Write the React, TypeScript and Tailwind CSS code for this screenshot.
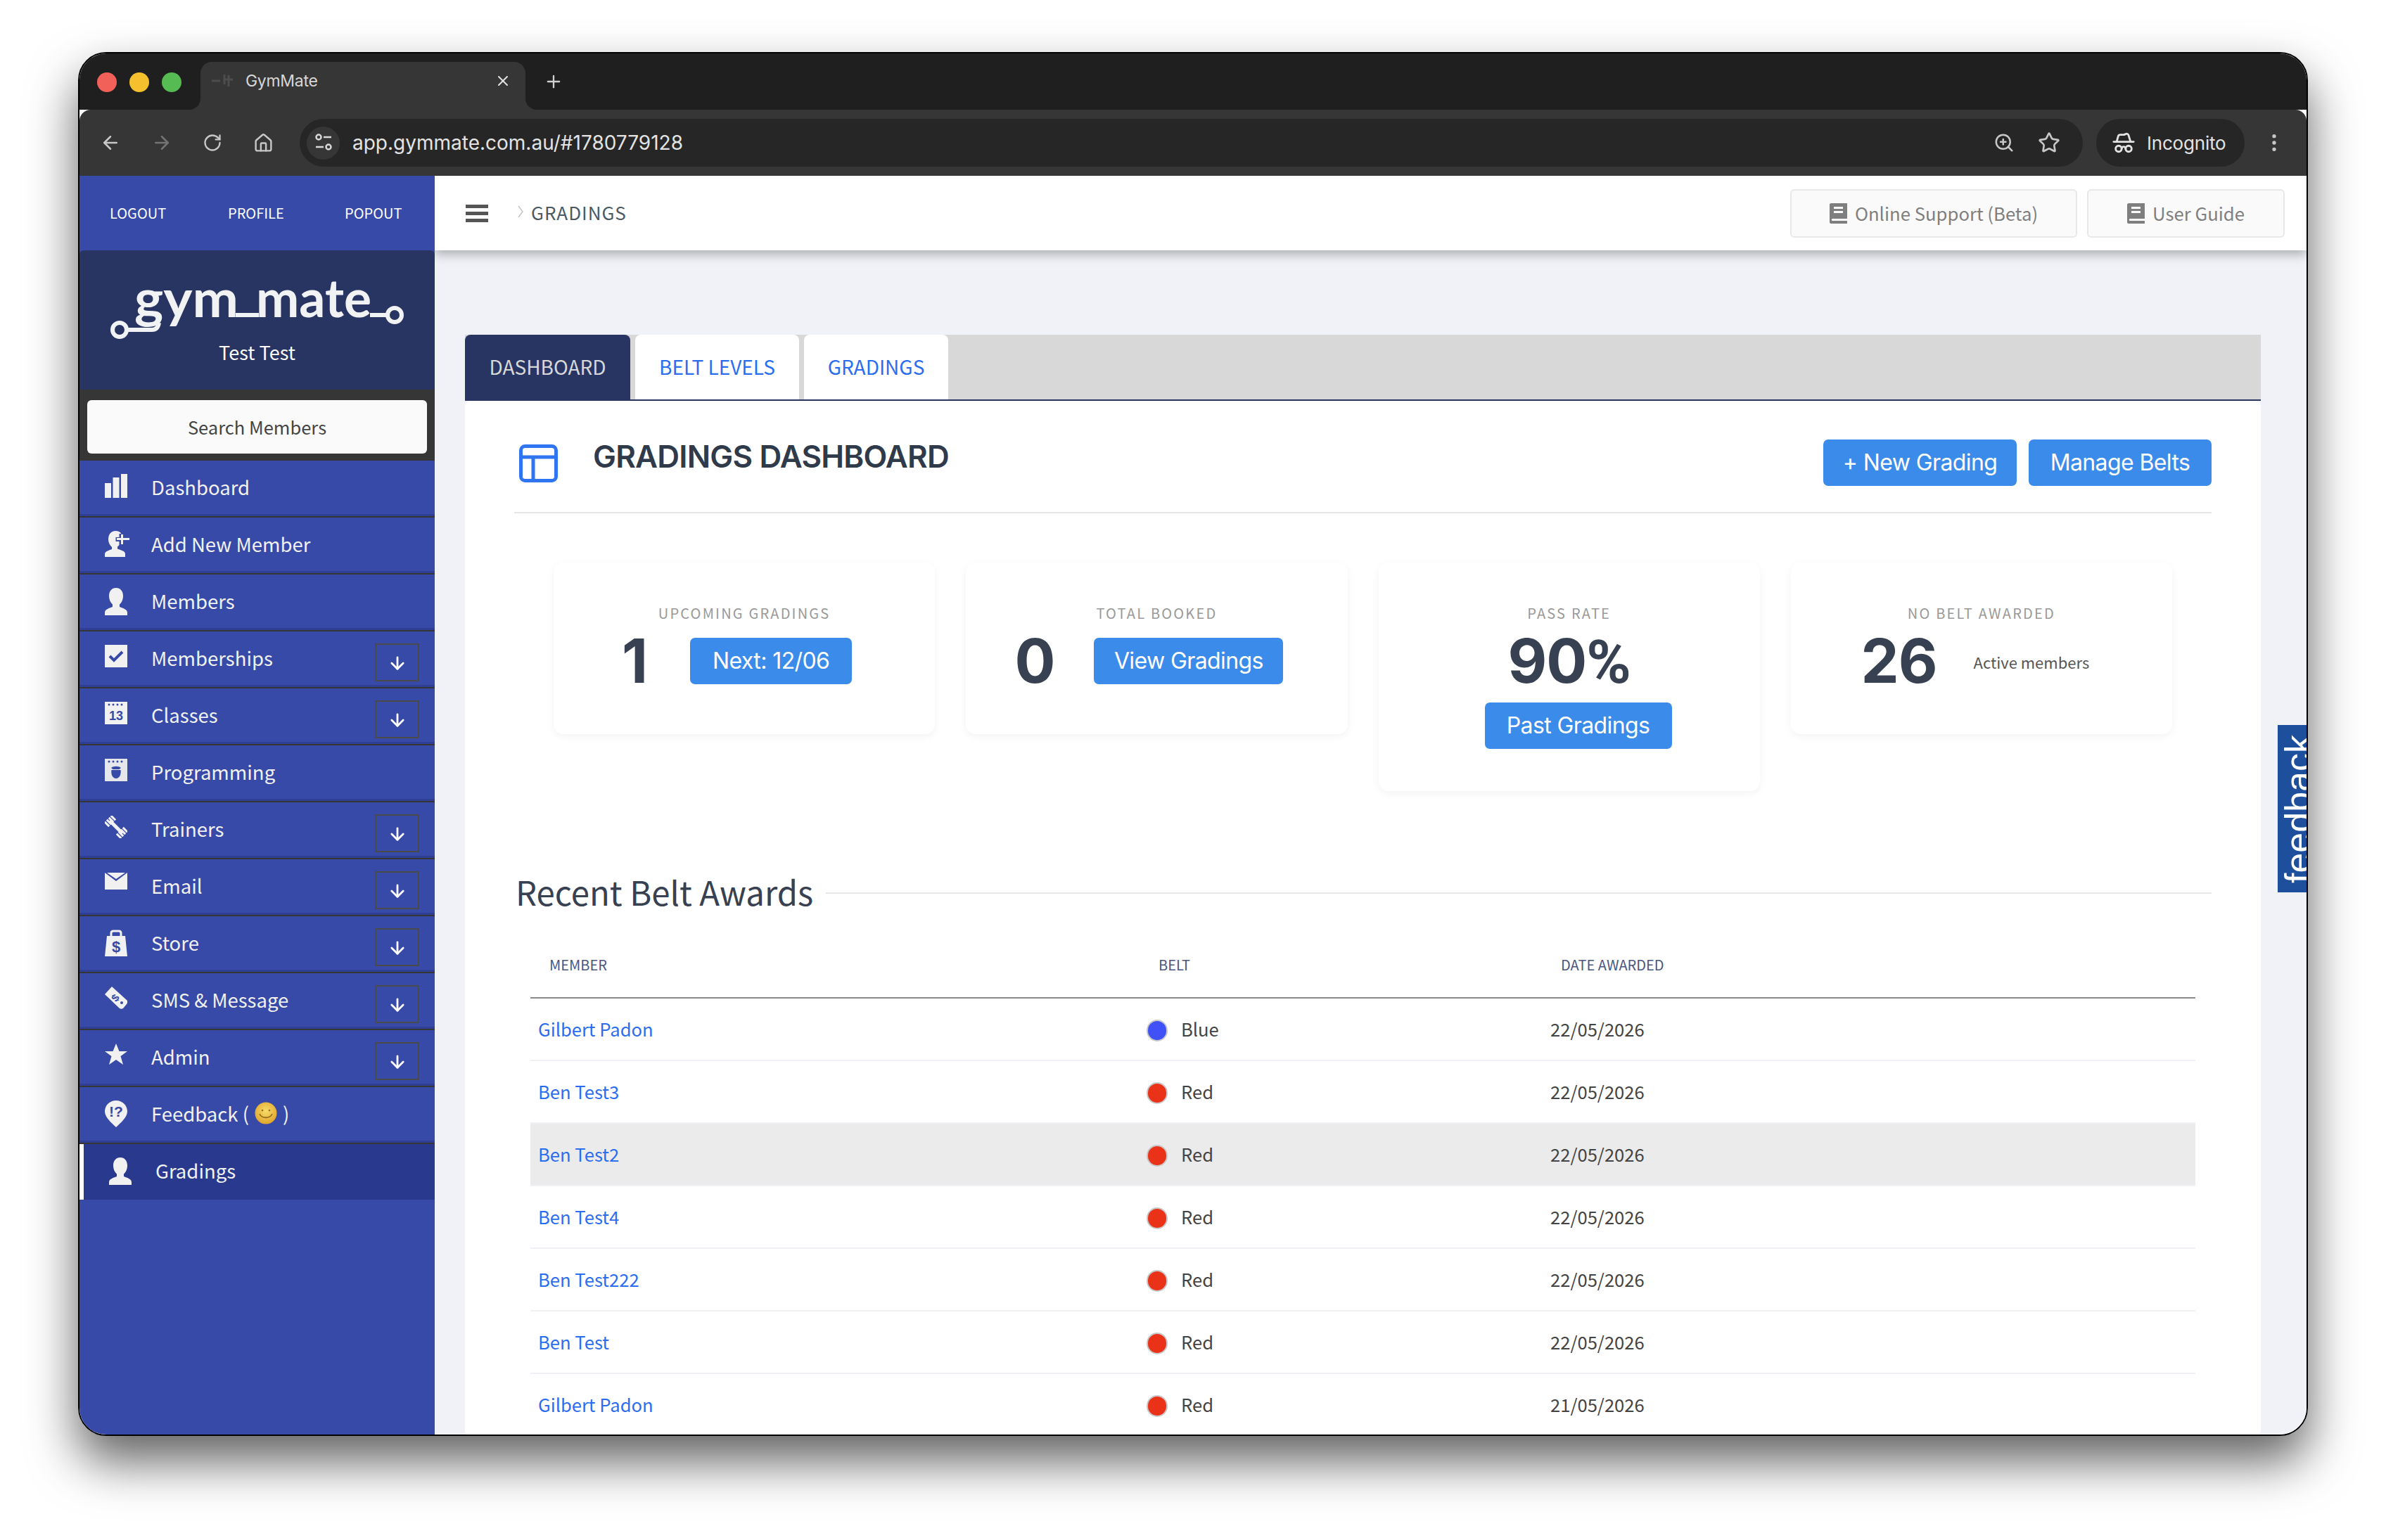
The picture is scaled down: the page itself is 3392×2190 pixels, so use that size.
import { ArrowDown, ArrowLeft, ArrowRight, EllipsisVertical, HatGlasses, House, Plus, RotateCw, Star, X, ZoomIn } from 'lucide-react';
import type { ReactNode } from 'react';

const BarsIcon = () => (
  <svg width="32" height="34" viewBox="0 0 32 34" fill="#f1f1f1">
    <rect x="0" y="13" width="9" height="21" />
    <rect x="11.5" y="5" width="9" height="29" />
    <rect x="23" y="0" width="9" height="34" />
  </svg>
);

const UserIcon = () => (
  <svg width="32" height="39" viewBox="0 0 32 39" fill="#f1f1f1">
    <path d="M16 0c6 0 10 4.600 10 11.500 0 5-2 9.500-5 12v3.500c3 1.500 11 3 11 8v4H0v-4c0-5 8-6.500 11-8v-3.500c-3-2.500-5-7-5-12C6 4.600 10 0 16 0z" />
  </svg>
);

const AddUserIcon = () => (
  <svg width="36" height="37" viewBox="0 0 36 37" fill="#f1f1f1">
    <path d="M15 0c4 0 7 1.500 8.500 4h-3v5h-5v6h5v5c-.8 1-1.500 1.800-2.500 2.500v3c3 1.500 11 2.500 11 7v4.500H0V33c0-4.500 7-5.500 10-7v-3c-3-2.500-5-6.500-5-11C5 5 9 0 15 0z" />
    <path d="M23 5h3v5h9v3h-9v6h-3v-6h-6v-3h6z" />
  </svg>
);

const CheckIcon = () => (
  <svg width="32" height="32" viewBox="0 0 32 32">
    <rect width="32" height="32" fill="#f1f1f1" />
    <path d="M7 16l6 6L25 10" fill="none" stroke="#374aa7" strokeWidth="4" />
  </svg>
);

const CalendarIcon = () => (
  <svg width="32" height="32" viewBox="0 0 32 32">
    <rect width="32" height="32" fill="#f1f1f1" />
    <g fill="#374aa7">
      <circle cx="6" cy="4" r="1.500" />
      <circle cx="12" cy="4" r="1.500" />
      <circle cx="18" cy="4" r="1.500" />
      <circle cx="24" cy="4" r="1.500" />
    </g>
    <text x="16" y="26" textAnchor="middle" fill="#374aa7" fontSize="18" fontWeight="700" fontFamily="Liberation Sans">13</text>
  </svg>
);

const AppleCalendarIcon = () => (
  <svg width="32" height="32" viewBox="0 0 32 32">
    <rect width="32" height="32" fill="#e6e7ea" />
    <g fill="#374aa7">
      <circle cx="6" cy="4" r="1.500" />
      <circle cx="12" cy="4" r="1.500" />
      <circle cx="18" cy="4" r="1.500" />
      <circle cx="24" cy="4" r="1.500" />
    </g>
    <path d="M9 13c3-3 11-3 14 0l-2.500 2h-9zM9.500 16h13c1 5-1 12-6.500 12S8.500 21 9.500 16z" fill="#374aa7" />
  </svg>
);

const DumbbellIcon = () => (
  <svg width="32" height="32" viewBox="0 0 32 32" fill="none" stroke="#f1f1f1">
    <path d="M7 7l18 18" strokeWidth="5" />
    <path d="M2 13L13 2M19 30l11-11" strokeWidth="9" strokeDasharray="3 1.200" />
  </svg>
);

const MailIcon = () => (
  <svg width="32" height="24" viewBox="0 0 32 24" fill="#f1f1f1">
    <path d="M0 0l16 12L32 0v24H0z" />
    <path d="M3 0h26L16 9z" />
  </svg>
);

const BagIcon = () => (
  <svg width="32" height="38" viewBox="0 0 32 38">
    <path d="M3 9h26l3 29H0z" fill="#f1f1f1" />
    <path d="M9 10V5c0-2 1-3 3-3h8c2 0 3 1 3 3v5" fill="none" stroke="#f1f1f1" strokeWidth="3" />
    <text x="16" y="32" textAnchor="middle" fill="#374aa7" fontSize="22" fontWeight="700" fontFamily="Liberation Sans">$</text>
  </svg>
);

const TagIcon = () => (
  <svg width="32" height="32" viewBox="0 0 32 32">
    <path d="M10 0l22 20c1 2 0 3-1 5l-5 6c-2 1-3 1-5 0L0 11z" fill="#f1f1f1" />
    <text x="15" y="21" textAnchor="middle" fill="#374aa7" fontSize="15" fontWeight="700" fontFamily="Liberation Sans" transform="rotate(-50 15 16)">$</text>
    <circle cx="24" cy="23" r="2" fill="#374aa7" />
  </svg>
);

const StarIcon = () => (
  <svg width="32" height="30" viewBox="0 0 32 30" fill="#f1f1f1">
    <path d="M16 0l4.500 11H32l-9.500 7 3.500 12-10-7-10 7 3.500-12L0 11h11.500z" />
  </svg>
);

const FeedbackIcon = () => (
  <svg width="32" height="38" viewBox="0 0 32 38">
    <path d="M16 0c9 0 16 7 16 15.500 0 8-9 16-16 22.500C9 31.500 0 23.500 0 15.500 0 7 7 0 16 0z" fill="#f1f1f1" />
    <text x="16" y="23" textAnchor="middle" fill="#374aa7" fontSize="21" fontWeight="700" fontFamily="Liberation Sans">!?</text>
  </svg>
);

const Smile = () => (
  <svg width="32" height="32" viewBox="0 0 32 32">
    <defs>
      <radialGradient id="smile" cx="50%" cy="40%" r="60%">
        <stop offset="0%" stopColor="#f8dc6b" />
        <stop offset="100%" stopColor="#e0a52a" />
      </radialGradient>
    </defs>
    <circle cx="16" cy="16" r="15.500" fill="url(#smile)" />
    <circle cx="11" cy="12" r="1.300" fill="#96701e" />
    <circle cx="21" cy="12" r="1.300" fill="#96701e" />
    <path d="M7 17c3 7 15 7 18 0" fill="none" stroke="#96701e" strokeWidth="1.800" />
  </svg>
);

const BookIcon = () => (
  <svg width="25" height="29" viewBox="0 0 25 29" fill="#7f7f7f">
    <path d="M2 0h23v22H4c-1.500 0-1.500 3 0 3h21v4H2c-1 0-2-1-2-2V2C0 1 1 0 2 0z" />
    <rect x="6" y="5" width="13" height="3" fill="#fafafa" />
    <rect x="6" y="11" width="13" height="3" fill="#fafafa" />
  </svg>
);

const PanelIcon = () => (
  <svg width="55" height="54" viewBox="0 0 55 54" fill="none" stroke="#2f74f0" strokeWidth="5">
    <rect x="2.500" y="2.500" width="50" height="49" rx="6" />
    <path d="M2.500 18h50M20 18v33" />
  </svg>
);

const Logo = () => (
  <svg width="430" height="104" viewBox="0 -20 430 104" fill="none" stroke="#f1f2f3" strokeWidth="6">
    <circle cx="19" cy="69" r="10" />
    <path d="M29 69h36c6 0 9-4 10-10" />
    <path d="M184 48h33M375 48h26" />
    <circle cx="410" cy="48" r="10" />
    <text x="40" y="51" fill="#f1f2f3" stroke="none" fontSize="74" fontWeight="700" fontFamily="Lato" textLength="148" lengthAdjust="spacingAndGlyphs">gym</text>
    <text x="213" y="51" fill="#f1f2f3" stroke="none" fontSize="74" fontWeight="700" fontFamily="Lato" textLength="164" lengthAdjust="spacingAndGlyphs">mate</text>
  </svg>
);

const TuneIcon = () => (
  <svg width="26" height="26" viewBox="0 0 26 26" fill="none" stroke="#d8d8d8" strokeWidth="2.500">
    <circle cx="6" cy="5" r="3.500" />
    <path d="M13 5h11M2 19h11" />
    <circle cx="20" cy="19" r="3.500" />
  </svg>
);

type MenuItem = {
  label: ReactNode;
  icon: ReactNode;
  hasArrow?: boolean;
};

const MENU_ITEMS: MenuItem[] = [
  { label: 'Dashboard', icon: <BarsIcon /> },
  { label: 'Add New Member', icon: <AddUserIcon /> },
  { label: 'Members', icon: <UserIcon /> },
  { label: 'Memberships', icon: <CheckIcon />, hasArrow: true },
  { label: 'Classes', icon: <CalendarIcon />, hasArrow: true },
  { label: 'Programming', icon: <AppleCalendarIcon /> },
  { label: 'Trainers', icon: <DumbbellIcon />, hasArrow: true },
  { label: 'Email', icon: <MailIcon />, hasArrow: true },
  { label: 'Store', icon: <BagIcon />, hasArrow: true },
  { label: 'SMS & Message', icon: <TagIcon />, hasArrow: true },
  { label: 'Admin', icon: <StarIcon />, hasArrow: true },
  {
    label: (
      <span className="flex items-center gap-[8px]">
        Feedback (
        <Smile />)
      </span>
    ),
    icon: <FeedbackIcon />,
  },
];

const AWARDS = [
  { member: 'Gilbert Padon', belt: 'Blue', date: '22/05/2026' },
  { member: 'Ben Test3', belt: 'Red', date: '22/05/2026' },
  { member: 'Ben Test2', belt: 'Red', date: '22/05/2026', highlighted: true },
  { member: 'Ben Test4', belt: 'Red', date: '22/05/2026' },
  { member: 'Ben Test222', belt: 'Red', date: '22/05/2026' },
  { member: 'Ben Test', belt: 'Red', date: '22/05/2026' },
  { member: 'Gilbert Padon', belt: 'Red', date: '21/05/2026' },
];

const PrimaryButton = ({ children, className }: { children: ReactNode; className?: string }) => (
  <button className={`flex h-[66px] items-center justify-center rounded-[7px] bg-[#3b8bea] font-['Inter',sans-serif] text-[32px] tracking-[-0.6px] text-white ${className}`}>
    {children}
  </button>
);

const Sidebar = () => (
  <aside className="flex w-[505px] shrink-0 flex-col bg-[#374aa7]">
    <div className="flex h-[106px] items-center pl-[43px] text-[20px] text-white">
      <span className="w-[168px]">LOGOUT</span>
      <span className="w-[166px]">PROFILE</span>
      <span>POPOUT</span>
    </div>
    <div className="flex h-[198px] flex-col items-center rounded-t-[6px] bg-[#283562] pt-[24px]">
      <Logo />
      <p className="mt-[-3px] text-center text-[27px] leading-[40px] text-white">Test Test</p>
    </div>
    <div className="h-[101px] bg-[#363636] px-[11px] pt-[15px]">
      <div className="flex h-[76px] items-center justify-center rounded-[6px] bg-[#fafafa] text-[25.5px] text-[#444]">
        Search Members
      </div>
    </div>
    {MENU_ITEMS.map((item, i) => (
      <div key={i} className="flex h-[81px] border-b-2 border-[#363636] pl-[36px] text-[27.5px] text-[#f1f1f1] shadow-[inset_0_-3px_0_#2f3f96]">
        <div className="mt-[19px] w-[66px]">{item.icon}</div>
        <div className="mt-[17px] h-[40px] leading-[40px]">{item.label}</div>
        {item.hasArrow && (
          <div className="mt-[17px] mr-[22px] ml-auto flex h-[54px] w-[63px] items-center justify-center border-2 border-[#4a4a4a] pt-[2px] text-white">
            <ArrowDown size={28} strokeWidth={2.4} />
          </div>
        )}
      </div>
    ))}
    <div className="flex h-[79px] border-l-[6px] border-white bg-[#29398d] pl-[36px] text-[27.5px] text-[#f1f1f1]">
      <div className="mt-[19px] w-[66px]">
        <UserIcon />
      </div>
      <div className="mt-[17px] h-[40px] leading-[40px]">Gradings</div>
    </div>
  </aside>
);

const Header = () => (
  <header className="relative z-10 flex h-[106px] shrink-0 items-center bg-white pr-[31px] pl-[44px] shadow-[0_6px_14px_rgba(0,0,0,0.28)]">
    <div className="flex w-[32px] flex-col gap-[5px]">
      <span className="h-[5px] bg-[#555]" />
      <span className="h-[5px] bg-[#555]" />
      <span className="h-[5px] bg-[#555]" />
    </div>
    <svg className="mt-[-4px] ml-[42px]" width="8" height="18" viewBox="0 0 8 18" fill="none" stroke="#c4c4c4" strokeWidth="1.500">
      <path d="M1 1l6 8-6 8" />
    </svg>
    <span className="mt-[-3px] ml-[11px] text-[26px] tracking-[1px] text-[#4a5a64]">GRADINGS</span>
    <button className="ml-auto flex h-[69px] w-[408px] items-center justify-center gap-[11px] rounded-[6px] border-2 border-[#e8e8e8] bg-[#fafafa] text-[25.7px] text-[#7f7f7f]">
      <BookIcon />
      Online Support (Beta)
    </button>
    <button className="ml-[14px] flex h-[69px] w-[281px] items-center justify-center gap-[11px] rounded-[6px] border-2 border-[#e8e8e8] bg-[#fafafa] text-[25.7px] text-[#7f7f7f]">
      <BookIcon />
      User Guide
    </button>
  </header>
);

const StatLabel = ({ children }: { children: ReactNode }) => (
  <p className="text-center text-[20px] leading-[24px] tracking-[2.2px] text-[#999]">{children}</p>
);

const StatNumber = ({ children }: { children: ReactNode }) => (
  <span className="font-['Inter',sans-serif] text-[86px] leading-[66px] font-bold tracking-[-1px] text-[#374151]">{children}</span>
);

const Stats = () => (
  <div className="mx-[56px] mt-[70px] grid grid-cols-4 items-start gap-[44px]">
    <div className="rounded-[14px] bg-white pt-[60px] pb-[71px] shadow-[0_3px_12px_rgba(0,0,0,0.05)]">
      <StatLabel>UPCOMING GRADINGS</StatLabel>
      <div className="mt-[23px] flex items-center justify-center gap-[61px] pr-[21px]">
        <StatNumber>1</StatNumber>
        <PrimaryButton className="w-[230px]">Next: 12/06</PrimaryButton>
      </div>
    </div>
    <div className="rounded-[14px] bg-white pt-[60px] pb-[71px] shadow-[0_3px_12px_rgba(0,0,0,0.05)]">
      <StatLabel>TOTAL BOOKED</StatLabel>
      <div className="mt-[23px] flex items-center justify-center gap-[56px] pr-[22px]">
        <StatNumber>0</StatNumber>
        <PrimaryButton className="w-[269px]">View Gradings</PrimaryButton>
      </div>
    </div>
    <div className="rounded-[14px] bg-white pt-[60px] pb-[60px] shadow-[0_3px_12px_rgba(0,0,0,0.05)]">
      <StatLabel>PASS RATE</StatLabel>
      <div className="mt-[23px] text-center">
        <StatNumber>
          90<span className="font-['Roboto',sans-serif]">%</span>
        </StatNumber>
      </div>
      <PrimaryButton className="mt-[23px] ml-[151px] w-[266px]">Past Gradings</PrimaryButton>
    </div>
    <div className="rounded-[14px] bg-white pt-[60px] pb-[71px] shadow-[0_3px_12px_rgba(0,0,0,0.05)]">
      <StatLabel>NO BELT AWARDED</StatLabel>
      <div className="mt-[23px] flex h-[66px] items-center justify-center gap-[52px] pr-[18px]">
        <StatNumber>26</StatNumber>
        <span className="mt-[2px] text-[22px] text-[#555]">Active members</span>
      </div>
    </div>
  </div>
);

const AwardsTable = () => (
  <div className="mx-[23px] mt-[43px]">
    <div className="grid h-[77px] grid-cols-[871px_569px_1fr] border-b-2 border-[#8a8a8a] pt-[17px] text-[20px] leading-[24px] text-[#4b5680]">
      <span className="pl-[27px]">MEMBER</span>
      <span className="pl-[22px]">BELT</span>
      <span className="pl-[25px]">DATE AWARDED</span>
    </div>
    {AWARDS.map((row, i) => (
      <div key={i} className={`grid h-[89px] grid-cols-[871px_569px_1fr] items-center border-b-2 border-[#f1f1f5] text-[25.6px] ${row.highlighted ? 'bg-[#ebebeb]' : ''}`}>
        <a className="pl-[11px] text-[#2b6df0]">{row.member}</a>
        <span className="flex items-center pl-[5px] text-[#444]">
          <span className={`mt-[4px] h-[31px] w-[30px] rounded-full border-2 border-[#c8c8c8] ${row.belt === 'Blue' ? 'bg-[#4052f7]' : 'bg-[#ea3219]'}`} />
          <span className="ml-[19px]">{row.belt}</span>
        </span>
        <span className="pl-[10px] text-[#444]">{row.date}</span>
      </div>
    ))}
  </div>
);

const Main = () => (
  <main className="relative flex min-w-0 flex-1 flex-col overflow-hidden bg-[#f0f2f7]">
    <Header />
    <div className="pt-[120px] pr-[65px] pl-[43px]">
      <div className="flex h-[94px] gap-[7px] border-b-2 border-[#283562] bg-[#d8d8d8] text-[28px]">
        <div className="flex w-[235px] items-center justify-center rounded-t-[8px] bg-[#283562] pb-[3px] text-[#d8d8d8]">DASHBOARD</div>
        <div className="flex w-[233px] items-center justify-center rounded-t-[8px] bg-white pb-[3px] text-[#2b6df0]">BELT LEVELS</div>
        <div className="flex w-[205px] items-center justify-center rounded-t-[8px] bg-white pb-[3px] text-[#2b6df0]">GRADINGS</div>
      </div>
      <section className="rounded-[8px] bg-white px-[70px] pt-[55px]">
        <div className="flex h-[105px] items-start border-b-2 border-[#e5e5e5]">
          <div className="mt-[7px] ml-[7px]">
            <PanelIcon />
          </div>
          <h1 className="mt-[-4px] ml-[50px] font-['Inter',sans-serif] text-[44px] leading-[56px] font-semibold tracking-[-0.8px] text-[#2f3a4a]">
            GRADINGS DASHBOARD
          </h1>
          <PrimaryButton className="ml-auto w-[275px]">+ New Grading</PrimaryButton>
          <PrimaryButton className="ml-[17px] w-[260px]">Manage Belts</PrimaryButton>
        </div>
        <Stats />
        <div className="mt-[115px] flex h-[60px] items-center gap-[18px]">
          <h2 className="mt-[-4px] pl-[2px] text-[47.3px] leading-[60px] text-[#374151]">Recent Belt Awards</h2>
          <div className="h-[2px] flex-1 bg-[#e8e8e8]" />
        </div>
        <AwardsTable />
      </section>
    </div>
    <div className="absolute top-[781px] right-0 flex h-[238px] w-[41px] items-start justify-start overflow-hidden bg-[#1d4f9c]">
      <span className="mt-[225px] ml-[3px] h-0 origin-top-left -rotate-90 font-['Liberation_Sans',sans-serif] text-[52px] leading-[52px] whitespace-nowrap text-white">
        feedback
      </span>
    </div>
  </main>
);

const BrowserChrome = () => (
  <>
    <div className="relative flex h-[80px] items-end bg-[#1f1f1f] pl-[172px]">
      <div className="absolute top-[27px] left-[25px] flex gap-[18px]">
        <span className="h-[28px] w-[28px] rounded-full bg-[#f2605a]" />
        <span className="h-[28px] w-[28px] rounded-full bg-[#f5c02d]" />
        <span className="h-[28px] w-[28px] rounded-full bg-[#56bb52]" />
      </div>
      <div className="relative flex h-[68px] w-[462px] items-center rounded-t-[16px] bg-[#363636] pr-[20px] pb-[14px] pl-[16px]">
        <svg className="absolute bottom-0 -left-[16px]" width="16" height="16" viewBox="0 0 16 16" fill="#363636">
          <path d="M16 0v16H0c9 0 16-7 16-16z" />
        </svg>
        <svg className="absolute -right-[16px] bottom-0" width="16" height="16" viewBox="0 0 16 16" fill="#363636">
          <path d="M0 0v16h16C7 16 0 9 0 0z" />
        </svg>
        <svg width="32" height="24" viewBox="0 0 32 24" fill="none" stroke="#4d4d4d" strokeWidth="3">
          <path d="M0 12h12M18 3v14M18 10h12M24 4v16" />
        </svg>
        <span className="ml-[16px] font-['Inter',sans-serif] text-[23px] tracking-[-0.3px] text-[#d6d6d6]">GymMate</span>
        <X className="ml-auto text-[#e3e3e3]" size={24} />
      </div>
      <Plus className="mb-[26px] ml-[26px] text-[#d0d0d0]" size={28} />
    </div>
    <div className="flex h-[94px] items-center rounded-t-[16px] bg-[#363636] pl-[29px] text-[#c7c7c7]">
      <ArrowLeft size={30} />
      <ArrowRight className="ml-[43px] text-[#747474]" size={30} />
      <RotateCw className="ml-[43px]" size={28} />
      <House className="ml-[44px]" size={29} />
      <div className="ml-[37px] flex h-[68px] w-[2535px] items-center rounded-full bg-[#262626] pr-[32px] pl-[10px]">
        <div className="flex h-[47px] w-[47px] items-center justify-center rounded-full bg-[#363636]">
          <TuneIcon />
        </div>
        <span className="ml-[18px] font-['Inter',sans-serif] text-[28px] tracking-[0px] text-[#e3e3e3]">app.gymmate.com.au/#1780779128</span>
        <ZoomIn className="ml-auto" size={30} />
        <Star className="ml-[33px]" size={32} />
      </div>
      <div className="ml-[19px] flex h-[68px] w-[211px] items-center rounded-full bg-[#262626] pl-[22px] text-[#e3e3e3]">
        <HatGlasses size={34} />
        <span className="ml-[16px] font-['Inter',sans-serif] text-[26px] tracking-[-0.2px]">Incognito</span>
      </div>
      <EllipsisVertical className="ml-[26px]" size={32} />
    </div>
  </>
);

export default function App() {
  return (
    <div className="h-[2190px] w-[3392px] overflow-hidden bg-white pt-[74px] pl-[111px] font-['Noto_Sans_CJK_JP','Noto_Sans',sans-serif]">
      <div className="flex h-[1968px] w-[3170px] flex-col overflow-hidden rounded-[40px] border-2 border-black shadow-[0_36px_70px_rgba(0,0,0,0.62)]">
        <BrowserChrome />
        <div className="flex min-h-0 flex-1">
          <Sidebar />
          <Main />
        </div>
      </div>
    </div>
  );
}
